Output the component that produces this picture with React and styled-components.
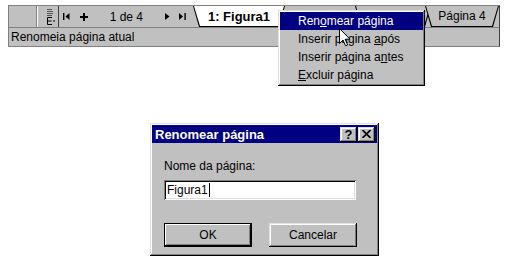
import React from "react";
import styled, { createGlobalStyle, css } from "styled-components";

const GlobalStyle = createGlobalStyle`
  html, body {
    margin: 0;
    padding: 0;
    background: #fff;
  }
  body {
    font-family: "Liberation Sans", Arial, sans-serif;
    font-size: 12px;
    color: #000;
  }
`;

const raised = css`
  box-shadow: inset -1px -1px #000, inset 1px 1px #dfdfdf,
    inset -2px -2px #808080, inset 2px 2px #fff;
`;

const sunken = css`
  box-shadow: inset 1px 1px #808080, inset -1px -1px #fff,
    inset 2px 2px #000, inset -2px -2px #dfdfdf;
`;

const Page = styled.div`
  position: relative;
  width: 510px;
  height: 272px;
  overflow: hidden;
`;

const TopArea = styled.div`
  padding: 5px 0 0 8px;
`;

const Strip = styled.div`
  width: 492px;
  box-sizing: border-box;
  display: flex;
  flex-direction: column;
  background: #c0c0c0;
  border-top: 1px solid #808080;
  border-left: 1px solid #808080;
  border-right: 1px solid #404040;
  border-bottom: 1px solid #808080;
`;

const TabRow = styled.div`
  height: 21px;
  display: flex;
  align-items: stretch;
  border-bottom: 1px solid #808080;
`;

const CornerBox = styled.div`
  width: 28px;
  border-right: 1px solid #808080;
  box-shadow: 1px 0 #fff;
`;

const SplitHandle = styled.div`
  width: 22px;
  display: flex;
  align-items: center;
  justify-content: flex-end;
  padding-right: 3px;
  box-sizing: border-box;
  border-right: 1px solid #404040;
`;

const Nav = styled.div`
  display: flex;
  align-items: center;
  padding-left: 1px;
`;

const NavButton = styled.div`
  width: 14px;
  height: 14px;
  display: flex;
  align-items: center;
  justify-content: center;
  margin-left: ${(p) => p.$gap || 0}px;
`;

const PageCount = styled.span`
  margin: 0 17px 0 19px;
  font-size: 12px;
  line-height: 14px;
  white-space: nowrap;
`;

const Tabs = styled.div`
  display: flex;
  margin-left: 4px;
  flex: 1;
`;

const TabShape = styled.div`
  position: relative;
  z-index: ${(p) => (p.$active ? 3 : 1)};
  width: ${(p) => p.$width}px;
  flex-shrink: 0;
  margin-left: ${(p) => (p.$first ? 0 : -6)}px;
  background: #000;
  clip-path: polygon(0 0, 100% 0, calc(100% - 6px) 100%, 6px 100%);
  display: flex;
`;

const TabFace = styled.div`
  flex: 1;
  margin: 0 1px 1px 1px;
  background: ${(p) => (p.$active ? "#fff" : "#c0c0c0")};
  clip-path: polygon(0 0, 100% 0, calc(100% - 6px) 100%, 6px 100%);
  display: flex;
  align-items: center;
  justify-content: center;
  font-size: ${(p) => (p.$active ? 13 : 12)}px;
  font-weight: ${(p) => (p.$active ? "bold" : "normal")};
  white-space: nowrap;
`;

const StatusBar = styled.div`
  height: 18px;
  display: flex;
  align-items: center;
  padding-left: 2px;
  font-size: 12px;
`;

const ContextMenu = styled.div`
  position: absolute;
  left: 278px;
  top: 10px;
  width: 147px;
  padding: 2px;
  box-sizing: border-box;
  background: #c0c0c0;
  ${raised};
  z-index: 5;
`;

const MenuItem = styled.div`
  height: 18px;
  display: flex;
  align-items: center;
  padding-left: 18px;
  font-size: 12px;
  background: ${(p) => (p.$selected ? "#000080" : "transparent")};
  color: ${(p) => (p.$selected ? "#fff" : "#000")};
`;

const MenuLabel = styled.span`
  white-space: pre;
`;

const Cursor = styled.svg`
  position: absolute;
  left: 339px;
  top: 28px;
  z-index: 6;
`;

const DialogRow = styled.div`
  display: flex;
  padding-left: 150px;
  margin-top: 76px;
`;

const Dialog = styled.div`
  width: 229px;
  height: 133px;
  box-sizing: border-box;
  padding: 2px;
  background: #c0c0c0;
  ${raised};
  display: flex;
  flex-direction: column;
`;

const TitleBar = styled.div`
  height: 18px;
  background: #000080;
  color: #fff;
  font-size: 13px;
  font-weight: bold;
  display: flex;
  align-items: center;
  justify-content: space-between;
  padding: 0 2px 0 3px;
`;

const TitleButtons = styled.div`
  display: flex;
  gap: 1px;
`;

const TitleButton = styled.div`
  width: 17px;
  height: 15px;
  background: #c0c0c0;
  ${raised};
  color: #000;
  display: flex;
  align-items: center;
  justify-content: center;
  font-size: 13px;
  font-weight: bold;
  line-height: 15px;
`;

const Body = styled.div`
  padding: 16px 0 0 12px;
  display: flex;
  flex-direction: column;
`;

const Label = styled.div`
  font-size: 12px;
  line-height: 14px;
`;

const TextField = styled.div`
  width: 192px;
  height: 20px;
  margin-top: 7px;
  box-sizing: border-box;
  background: #fff;
  ${sunken};
  display: flex;
  align-items: center;
  padding-left: 3px;
  font-size: 12px;
`;

const Caret = styled.span`
  display: inline-block;
  width: 1px;
  height: 14px;
  background: #000;
  margin-left: 1px;
`;

const ButtonRow = styled.div`
  display: flex;
  gap: 17px;
  margin-top: 23px;
`;

const Button = styled.div`
  width: 88px;
  height: 24px;
  box-sizing: border-box;
  background: #c0c0c0;
  ${raised};
  ${(p) =>
    p.$default &&
    css`
      box-shadow: inset 0 0 0 1px #000, inset -2px -2px #000,
        inset 2px 2px #fff, inset -3px -3px #808080;
    `}
  display: flex;
  align-items: center;
  justify-content: center;
  font-size: 12px;
`;

const FirstIcon = () => (
  <svg width="7" height="7" viewBox="0 0 7 7">
    <rect x="0" y="0" width="1.4" height="7" fill="#000" />
    <polygon points="6.5,0 6.5,7 2.5,3.5" fill="#000" />
  </svg>
);

const PlusIcon = () => (
  <svg width="8" height="8" viewBox="0 0 8 8">
    <path d="M4 0 V8 M0 4 H8" stroke="#000" strokeWidth="2" />
  </svg>
);

const NextIcon = () => (
  <svg width="5" height="7" viewBox="0 0 5 7">
    <polygon points="0,0 0,7 4.5,3.5" fill="#000" />
  </svg>
);

const LastIcon = () => (
  <svg width="7" height="7" viewBox="0 0 7 7">
    <polygon points="0,0 0,7 4,3.5" fill="#000" />
    <rect x="5.4" y="0" width="1.4" height="7" fill="#000" />
  </svg>
);

const SplitIcon = () => (
  <svg width="11" height="18" viewBox="0 0 11 18">
    <g stroke="#000" strokeWidth="1" fill="none">
      <path d="M3 1.5 H8 M3 3.5 H9 M3 5.5 H9 M3 7.5 H8" stroke="#555" />
      <path d="M3.5 9.5 V16.5 M3.5 9.5 H8 M3.5 13 H7.5 M3.5 16.5 H8" />
      <path d="M9 13 H11" />
    </g>
  </svg>
);

const CloseGlyph = () => (
  <svg width="9" height="8" viewBox="0 0 9 8">
    <path d="M0.5 0 L8.5 8 M8.5 0 L0.5 8" stroke="#000" strokeWidth="1.7" />
  </svg>
);

// tabs 2 and 3 sit under the context menu, so only their edges show
const tabs = [
  { id: 1, label: "1: Figura1", width: 92, active: true },
  { id: 2, label: "", width: 82 },
  { id: 3, label: "", width: 76 },
  { id: 4, label: "Página 4", width: 74 },
];

const menuItems = [
  { parts: ["Ren", "o", "mear página"], selected: true },
  { parts: ["Inserir página ", "a", "pós"] },
  { parts: ["Inserir página a", "n", "tes"] },
  { parts: ["", "E", "xcluir página"] },
];

const App = () => {
  return (
    <Page>
      <GlobalStyle />
      <TopArea>
        <Strip>
          <TabRow>
            <CornerBox />
            <SplitHandle>
              <SplitIcon />
            </SplitHandle>
            <Nav>
              <NavButton $gap={0}>
                <FirstIcon />
              </NavButton>
              <NavButton $gap={3}>
                <PlusIcon />
              </NavButton>
              <PageCount>1 de 4</PageCount>
              <NavButton>
                <NextIcon />
              </NavButton>
              <NavButton $gap={1}>
                <LastIcon />
              </NavButton>
            </Nav>
            <Tabs>
              {tabs.map((t, i) => (
                <TabShape key={t.id} $width={t.width} $active={t.active} $first={i === 0}>
                  <TabFace $active={t.active}>{t.label}</TabFace>
                </TabShape>
              ))}
            </Tabs>
          </TabRow>
          <StatusBar>Renomeia página atual</StatusBar>
        </Strip>
      </TopArea>

      <ContextMenu>
        {menuItems.map((m) => (
          <MenuItem key={m.parts.join("")} $selected={m.selected}>
            <MenuLabel>
              {m.parts[0]}
              <u>{m.parts[1]}</u>
              {m.parts[2]}
            </MenuLabel>
          </MenuItem>
        ))}
      </ContextMenu>
      <Cursor width="12" height="19" viewBox="0 0 12 19">
        <path
          d="M0.5 0.5 L0.5 15.5 L4 12 L6.5 17.8 L8.6 16.9 L6.2 11.2 L11 11.2 Z"
          fill="#fff"
          stroke="#000"
          strokeWidth="1"
        />
      </Cursor>

      <DialogRow>
        <Dialog>
          <TitleBar>
            <span>Renomear página</span>
            <TitleButtons>
              <TitleButton>?</TitleButton>
              <TitleButton>
                <CloseGlyph />
              </TitleButton>
            </TitleButtons>
          </TitleBar>
          <Body>
            <Label>Nome da página:</Label>
            <TextField>
              Figura1
              <Caret />
            </TextField>
            <ButtonRow>
              <Button $default>OK</Button>
              <Button>Cancelar</Button>
            </ButtonRow>
          </Body>
        </Dialog>
      </DialogRow>
    </Page>
  );
};

export default App;
